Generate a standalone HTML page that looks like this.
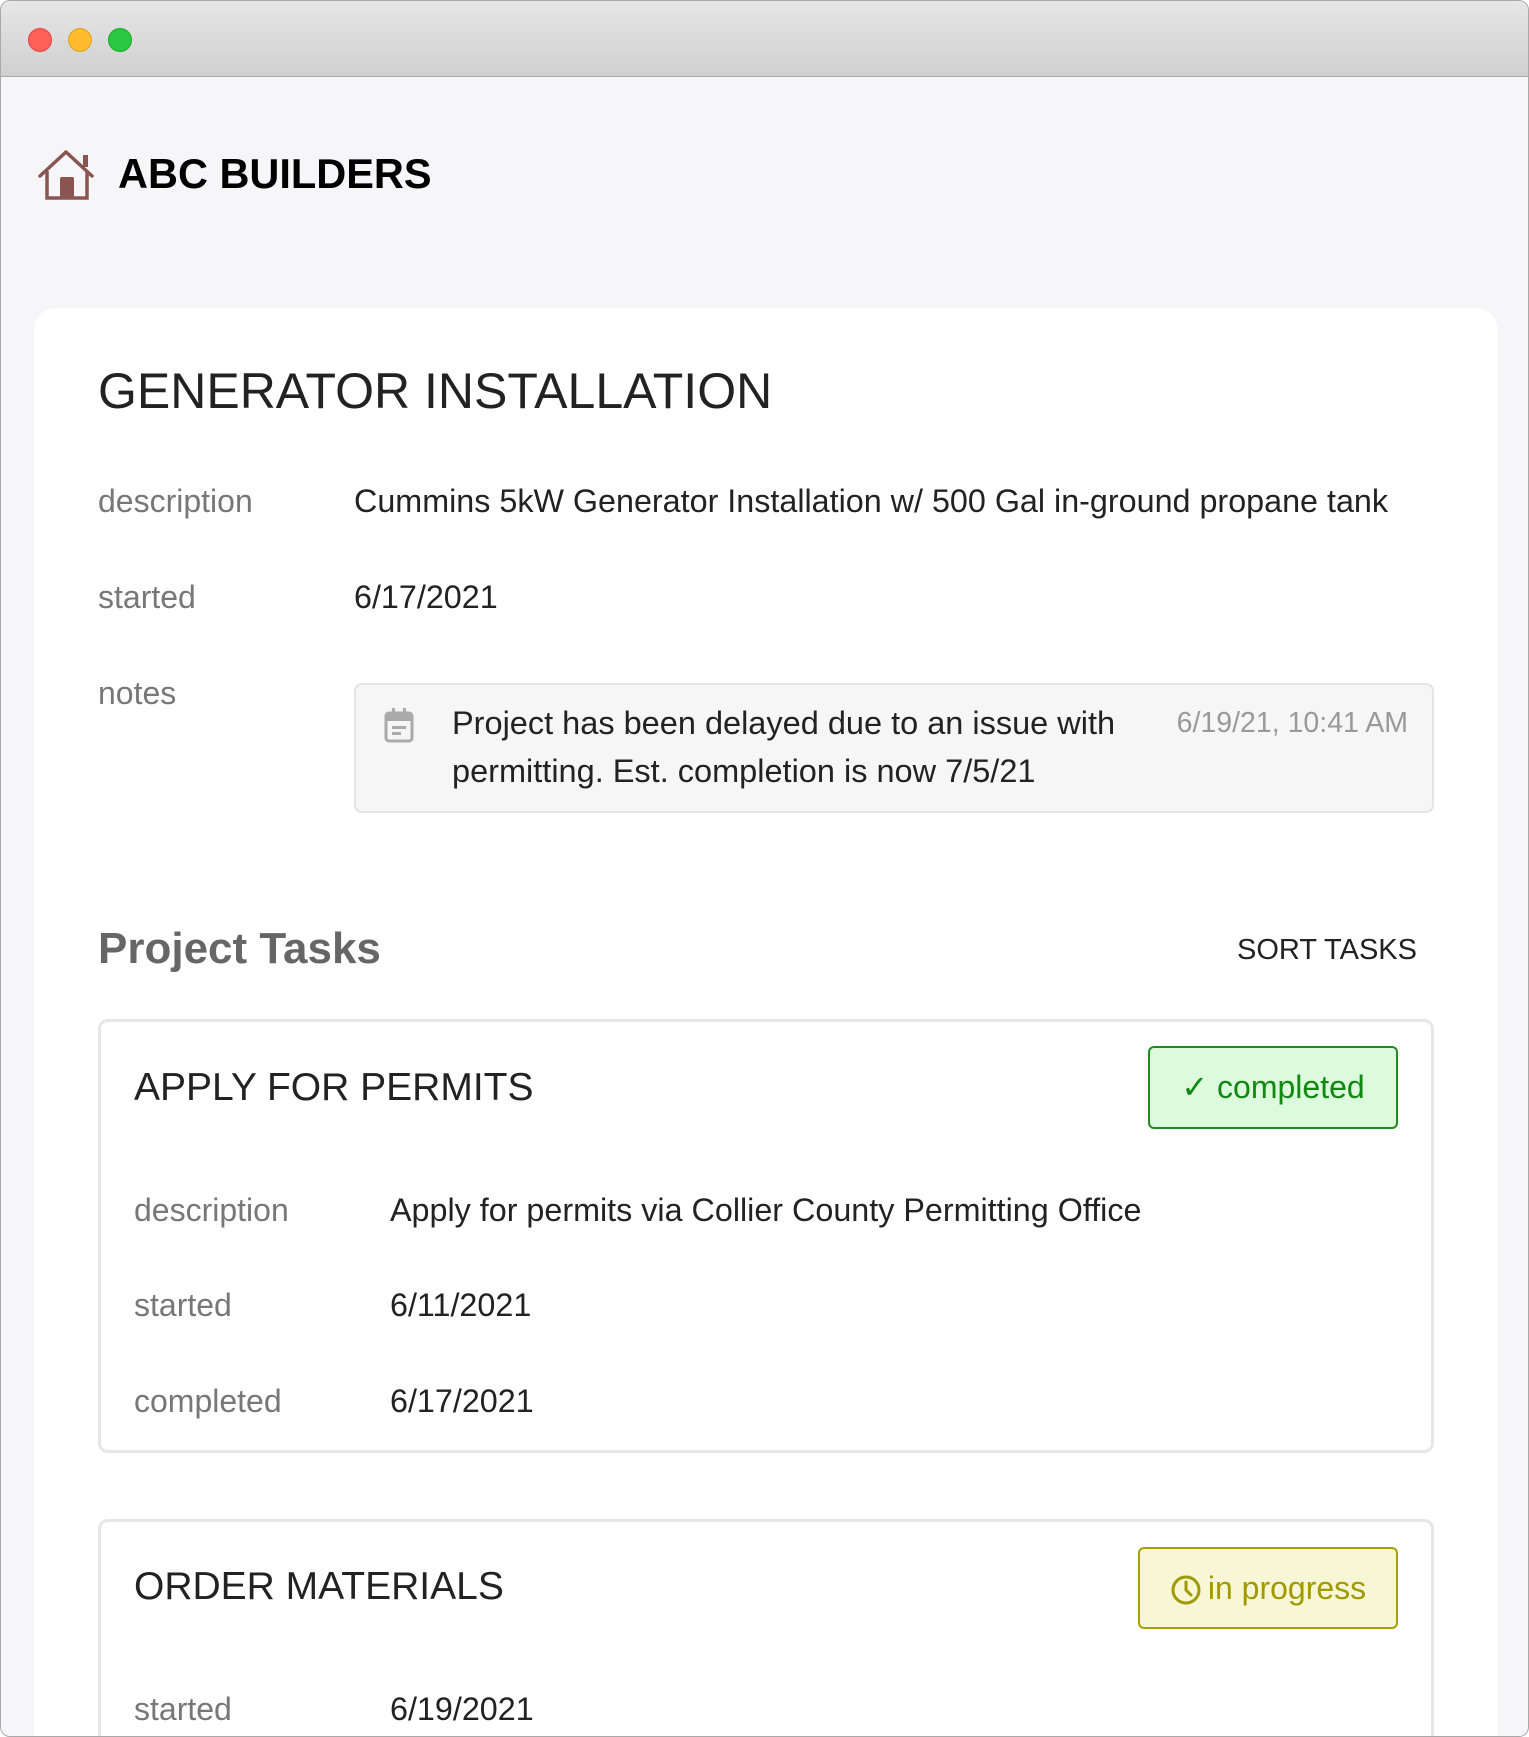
<!DOCTYPE html>
<html><head><meta charset="utf-8">
<style>
*{margin:0;padding:0;box-sizing:border-box}
html,body{width:1529px;height:1737px;overflow:hidden;background:#fff;font-family:"Liberation Sans",Arial,sans-serif}
.win{position:absolute;left:0;top:0;width:1529px;height:1737px;border:1px solid #a9a9a9;border-radius:10px;overflow:hidden;background:#f6f6f8}
.bar{position:absolute;left:0;top:0;right:0;height:76px;background:linear-gradient(#e6e6e6,#d0d0d0);border-bottom:1px solid #a8a8a8}
.dot{position:absolute;top:27px;width:24px;height:24px;border-radius:50%}
.abs{position:absolute;white-space:nowrap}
.card{position:absolute;left:33px;top:307px;width:1464px;height:1500px;background:#fff;border-radius:22px}
.lbl{position:absolute;color:#777;font-size:32px;line-height:36px}
.val{position:absolute;color:#222;font-size:32.3px;line-height:36px;white-space:nowrap}
.task{position:absolute;left:97px;width:1336px;border:3px solid #e6e6e6;border-radius:10px;background:#fff}
</style></head><body>
<div class="win">
<div class="bar">
<div class="dot" style="left:27px;background:#fe5f57;border:1px solid #e0443e"></div>
<div class="dot" style="left:67px;background:#febc2e;border:1px solid #dea123"></div>
<div class="dot" style="left:107px;background:#28c840;border:1px solid #1aab29"></div>
</div>
<svg class="abs" style="left:36px;top:148px" width="60" height="52" viewBox="0 0 60 52">
<path d="M3 27 L29 3 L55 27" fill="none" stroke="#8a5550" stroke-width="3.5" stroke-linejoin="round" stroke-linecap="round"/>
<path d="M10 22 V49 H50 V22" fill="none" stroke="#8a5550" stroke-width="3.5"/>
<rect x="46" y="6" width="5" height="12" fill="#8a5550"/>
<rect x="23" y="28" width="14" height="21" rx="2" fill="#8a5550"/>
</svg>
<div class="abs" style="left:117px;top:148px;font-size:41.5px;font-weight:bold;color:#000;line-height:50px">ABC BUILDERS</div>

<div class="card"></div>
<div class="abs" style="left:97px;top:361px;font-size:50px;color:#222;line-height:58px">GENERATOR INSTALLATION</div>
<div class="lbl" style="left:97px;top:482px">description</div>
<div class="val" style="left:353px;top:482px">Cummins 5kW Generator Installation w/ 500 Gal in-ground propane tank</div>
<div class="lbl" style="left:97px;top:578px">started</div>
<div class="val" style="left:353px;top:578px">6/17/2021</div>
<div class="lbl" style="left:97px;top:674px">notes</div>
<div class="abs" style="left:353px;top:682px;width:1080px;height:130px;background:#f6f6f6;border:2px solid #e4e4e4;border-radius:8px"></div>
<svg class="abs" style="left:383px;top:706px" width="32" height="36" viewBox="0 0 32 36">
<rect x="2" y="6" width="26" height="28" rx="3" fill="none" stroke="#aaa" stroke-width="3"/>
<rect x="2" y="6" width="26" height="8" fill="#aaa"/>
<rect x="8" y="1" width="3" height="7" fill="#aaa"/><rect x="19" y="1" width="3" height="7" fill="#aaa"/>
<rect x="8" y="19" width="14" height="3" fill="#aaa"/><rect x="8" y="25" width="9" height="3" fill="#aaa"/>
</svg>
<div class="val" style="left:451px;top:698px;line-height:48px;font-size:32.5px">Project has been delayed due to an issue with<br>permitting. Est. completion is now 7/5/21</div>
<div class="abs" style="left:1100px;top:702px;width:307px;text-align:right;font-size:28.5px;line-height:40px;color:#999">6/19/21, 10:41 AM</div>

<div class="abs" style="left:97px;top:922px;font-size:44px;font-weight:bold;color:#666;line-height:52px">Project Tasks</div>
<div class="abs" style="left:1100px;top:932px;width:316px;text-align:right;font-size:29px;color:#222;line-height:34px">SORT TASKS</div>

<div class="task" style="top:1018px;height:434px"></div>
<div class="abs" style="left:133px;top:1064px;font-size:39px;color:#222;line-height:46px">APPLY FOR PERMITS</div>
<div class="abs" style="left:1147px;top:1045px;width:250px;height:83px;background:#dcfadc;border:2px solid #1e8c1e;border-radius:6px;color:#118811;font-size:32px;line-height:79px;text-align:center"><span style="font-size:32px">✓</span> completed</div>
<div class="lbl" style="left:133px;top:1191px">description</div>
<div class="val" style="left:389px;top:1191px">Apply for permits via Collier County Permitting Office</div>
<div class="lbl" style="left:133px;top:1286px">started</div>
<div class="val" style="left:389px;top:1286px">6/11/2021</div>
<div class="lbl" style="left:133px;top:1382px">completed</div>
<div class="val" style="left:389px;top:1382px">6/17/2021</div>

<div class="task" style="top:1518px;height:300px"></div>
<div class="abs" style="left:133px;top:1563px;font-size:39px;color:#222;line-height:46px">ORDER MATERIALS</div>
<div class="abs" style="left:1137px;top:1546px;width:260px;height:82px;background:#f7f7d6;border:2px solid #a8a000;border-radius:6px;color:#a09a00;font-size:32px;line-height:78px;text-align:center">
<svg style="vertical-align:-7px;margin-right:6px" width="32" height="32" viewBox="0 0 32 32"><circle cx="16" cy="16" r="13" fill="none" stroke="#a09a00" stroke-width="3"/><path d="M16 8 V16 L21 21" fill="none" stroke="#a09a00" stroke-width="3" stroke-linecap="round"/></svg>in progress</div>
<div class="lbl" style="left:133px;top:1690px">started</div>
<div class="val" style="left:389px;top:1690px">6/19/2021</div>
</div>
</body></html>
